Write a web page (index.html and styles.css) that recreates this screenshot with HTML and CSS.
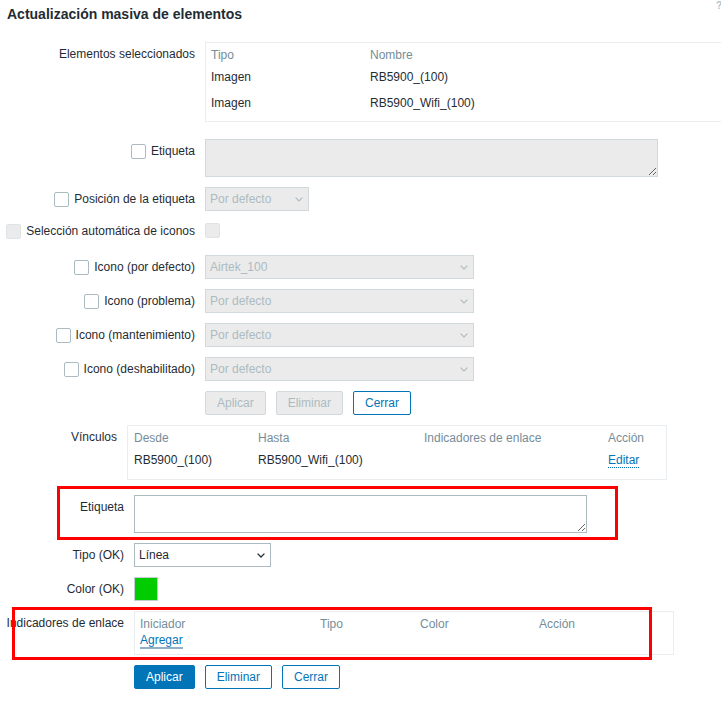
FILE: index.html
```html
<!DOCTYPE html>
<html lang="es">
<head>
<meta charset="utf-8">
<title>Actualización masiva de elementos</title>
<link rel="stylesheet" href="styles.css">
</head>
<body>
<div class="dialog">
  <header class="dlg-head">
    <h1 class="dlg-title">Actualización masiva de elementos</h1>
    <span class="help">?</span>
  </header>

  <div class="form">
    <div class="row row-elements">
      <div class="lbl">Elementos seleccionados</div>
      <div class="tbl tbl-elements">
        <div class="tr th"><span class="ce1">Tipo</span><span>Nombre</span></div>
        <div class="tr td"><span class="ce1">Imagen</span><span>RB5900_(100)</span></div>
        <div class="tr td"><span class="ce1">Imagen</span><span>RB5900_Wifi_(100)</span></div>
      </div>
    </div>

    <div class="row">
      <label class="lbl"><span class="cb"></span><span>Etiqueta</span></label>
      <textarea class="ta ta-disabled" disabled></textarea>
    </div>

    <div class="row">
      <label class="lbl"><span class="cb"></span><span>Posición de la etiqueta</span></label>
      <div class="select select-disabled w-pos"><span>Por defecto</span><svg class="chev" viewBox="0 0 8 5" width="8" height="5"><path d="M0.6 0.6 L4 4 L7.4 0.6" fill="none" stroke="currentColor" stroke-width="1.1"/></svg></div>
    </div>

    <div class="row row-auto">
      <label class="lbl"><span class="cb cb-disabled"></span><span>Selección automática de iconos</span></label>
      <span class="cb cb-disabled cb-field"></span>
    </div>

    <div class="row">
      <label class="lbl"><span class="cb"></span><span>Icono (por defecto)</span></label>
      <div class="select select-disabled w-icon"><span>Airtek_100</span><svg class="chev" viewBox="0 0 8 5" width="8" height="5"><path d="M0.6 0.6 L4 4 L7.4 0.6" fill="none" stroke="currentColor" stroke-width="1.1"/></svg></div>
    </div>

    <div class="row">
      <label class="lbl"><span class="cb"></span><span>Icono (problema)</span></label>
      <div class="select select-disabled w-icon"><span>Por defecto</span><svg class="chev" viewBox="0 0 8 5" width="8" height="5"><path d="M0.6 0.6 L4 4 L7.4 0.6" fill="none" stroke="currentColor" stroke-width="1.1"/></svg></div>
    </div>

    <div class="row">
      <label class="lbl"><span class="cb"></span><span>Icono (mantenimiento)</span></label>
      <div class="select select-disabled w-icon"><span>Por defecto</span><svg class="chev" viewBox="0 0 8 5" width="8" height="5"><path d="M0.6 0.6 L4 4 L7.4 0.6" fill="none" stroke="currentColor" stroke-width="1.1"/></svg></div>
    </div>

    <div class="row">
      <label class="lbl"><span class="cb"></span><span>Icono (deshabilitado)</span></label>
      <div class="select select-disabled w-icon"><span>Por defecto</span><svg class="chev" viewBox="0 0 8 5" width="8" height="5"><path d="M0.6 0.6 L4 4 L7.4 0.6" fill="none" stroke="currentColor" stroke-width="1.1"/></svg></div>
    </div>

    <div class="row">
      <div class="lbl"></div>
      <div class="btns">
        <button class="btn btn-disabled" disabled>Aplicar</button>
        <button class="btn btn-disabled" disabled>Eliminar</button>
        <button class="btn btn-alt">Cerrar</button>
      </div>
    </div>

    <div class="row row-links">
      <div class="lbl lbl-links">Vínculos</div>
      <div class="tbl tbl-links">
        <div class="tr th"><span class="cl1">Desde</span><span class="cl2">Hasta</span><span class="cl3">Indicadores de enlace</span><span>Acción</span></div>
        <div class="tr td"><span class="cl1">RB5900_(100)</span><span class="cl2">RB5900_Wifi_(100)</span><span class="cl3"></span><span><a class="link-dotted">Editar</a></span></div>
      </div>
    </div>

    <div class="row">
      <div class="lbl lbl-sub">Etiqueta</div>
      <textarea class="ta ta-sub"></textarea>
    </div>

    <div class="row">
      <div class="lbl lbl-sub">Tipo (OK)</div>
      <div class="select select-on w-type"><span>Línea</span><svg class="chev" viewBox="0 0 8 5" width="8" height="5"><path d="M0.6 0.6 L4 4 L7.4 0.6" fill="none" stroke="currentColor" stroke-width="1.3"/></svg></div>
    </div>

    <div class="row">
      <div class="lbl lbl-sub">Color (OK)</div>
      <span class="swatch"></span>
    </div>

    <div class="row">
      <div class="lbl lbl-sub">Indicadores de enlace</div>
      <div class="tbl tbl-ind">
        <div class="tr th"><span class="ci1">Iniciador</span><span class="ci2">Tipo</span><span class="ci3">Color</span><span>Acción</span></div>
        <div class="tr tadd"><a class="link-add">Agregar</a></div>
      </div>
    </div>

    <div class="row">
      <div class="lbl lbl-sub"></div>
      <div class="btns">
        <button class="btn btn-main">Aplicar</button>
        <button class="btn btn-alt">Eliminar</button>
        <button class="btn btn-alt">Cerrar</button>
      </div>
    </div>
  </div>

  <div class="annot annot-1"></div>
  <div class="annot annot-2"></div>
</div>
</body>
</html>
```

FILE: styles.css
```css
* { box-sizing: border-box; }

html, body {
  margin: 0;
  padding: 0;
}

body {
  width: 721px;
  height: 706px;
  overflow: hidden;
  background: #ffffff;
  font-family: "Liberation Sans", Arial, sans-serif;
  font-size: 12px;
  color: #1f2c33;
}

.dialog {
  position: relative;
  width: 721px;
  height: 706px;
}

.dlg-head {
  display: flex;
  height: 28px;
}

.dlg-title {
  margin: 0;
  padding-left: 7px;
  font-size: 14px;
  line-height: 28px;
  font-weight: bold;
  color: #1f2c33;
}

.help {
  margin-left: auto;
  margin-right: -1px;
  font-size: 10px;
  line-height: 12px;
  font-weight: bold;
  color: #b4c0c6;
}

.form {
  display: flex;
  flex-direction: column;
  gap: 10px;
  margin-top: 14px;
}

.row {
  display: flex;
  align-items: flex-start;
}

.lbl {
  flex: none;
  width: 205px;
  padding-right: 10px;
  padding-top: 3px;
  line-height: 18px;
  text-align: right;
  display: flex;
  justify-content: flex-end;
  align-items: center;
  gap: 5px;
  white-space: nowrap;
}

.lbl-links { width: 127px; }
.lbl-sub { width: 134px; }

.row-elements { margin-bottom: 7px; }
.row-links { margin-bottom: 5px; }
.row-auto { height: 24px; }
.row-auto .lbl { padding-top: 1px; }

/* checkboxes */
.cb {
  display: inline-block;
  flex: none;
  width: 15px;
  height: 15px;
  border: 1px solid #acbbc2;
  border-radius: 2px;
  background: #ffffff;
}

.cb-disabled {
  background: #ebebeb;
  border-color: #dde3e6;
}

.cb-field { margin-top: 2px; }

/* tables */
.tbl {
  flex: none;
  border: 1px solid #ebeef0;
  padding: 3px 5px 5px;
}

.tr { display: flex; }

.th {
  line-height: 18px;
  color: #768d99;
}

.td { line-height: 26px; }

.tbl-elements { width: 520px; height: 80px; }
.ce1 { width: 159px; }

.tbl-links { width: 540px; padding: 3px 6px 6px; }
.cl1 { width: 124px; }
.cl2 { width: 166px; }
.cl3 { width: 184px; }

.tbl-ind { width: 540px; }
.ci1 { width: 180px; }
.ci2 { width: 100px; }
.ci3 { width: 119px; }

.tadd { line-height: 18px; }

.link-dotted {
  color: #0275b8;
  border-bottom: 1px dotted #0275b8;
}

.link-add {
  color: #0275b8;
  line-height: 14px;
  border-bottom: 2px solid #8fb0c8;
}

/* textarea */
.ta {
  display: block;
  margin: 0;
  width: 453px;
  height: 38px;
  padding: 4px 5px;
  font: inherit;
  resize: both;
  border-radius: 0;
  outline: none;
}

.ta-disabled {
  background: #ebebeb;
  border: 1px solid #d1d9dd;
}

.ta-sub {
  background: #ffffff;
  border: 1px solid #acbbc2;
}

/* selects */
.select {
  flex: none;
  display: flex;
  align-items: center;
  justify-content: space-between;
  height: 24px;
  padding: 0 5px 0 4px;
  border: 1px solid #d1d9dd;
  white-space: nowrap;
}

.select-disabled {
  background: #ebebeb;
  color: #acbbc2;
}

.select-on {
  background: #ffffff;
  border-color: #acbbc2;
  color: #1f2c33;
}

.chev { flex: none; display: block; }

.w-pos { width: 104px; }
.w-icon { width: 269px; }
.w-type { width: 137px; }

/* swatch */
.swatch {
  display: block;
  flex: none;
  width: 24px;
  height: 24px;
  background: #00cc00;
  border: 1px solid #c3cdd2;
}

/* buttons */
.btns {
  display: flex;
  gap: 10px;
}

.btn {
  height: 24px;
  margin: 0;
  padding: 0 11px;
  border: 1px solid;
  border-radius: 2px;
  font: inherit;
  line-height: 22px;
}

.btn-disabled {
  background: #ebebeb;
  border-color: #d1d9dd;
  color: #acbbc2;
}

.btn-alt {
  background: #ffffff;
  border-color: #0275b8;
  color: #0275b8;
}

.btn-main {
  background: #0275b8;
  border-color: #0275b8;
  color: #ffffff;
}

/* red annotation frames drawn over the form */
.annot {
  position: absolute;
  border: 3px solid #ff0000;
  pointer-events: none;
}

.annot-1 {
  left: 57px;
  top: 486px;
  width: 561px;
  height: 54px;
}

.annot-2 {
  left: 12px;
  top: 607px;
  width: 640px;
  height: 53px;
}
```
